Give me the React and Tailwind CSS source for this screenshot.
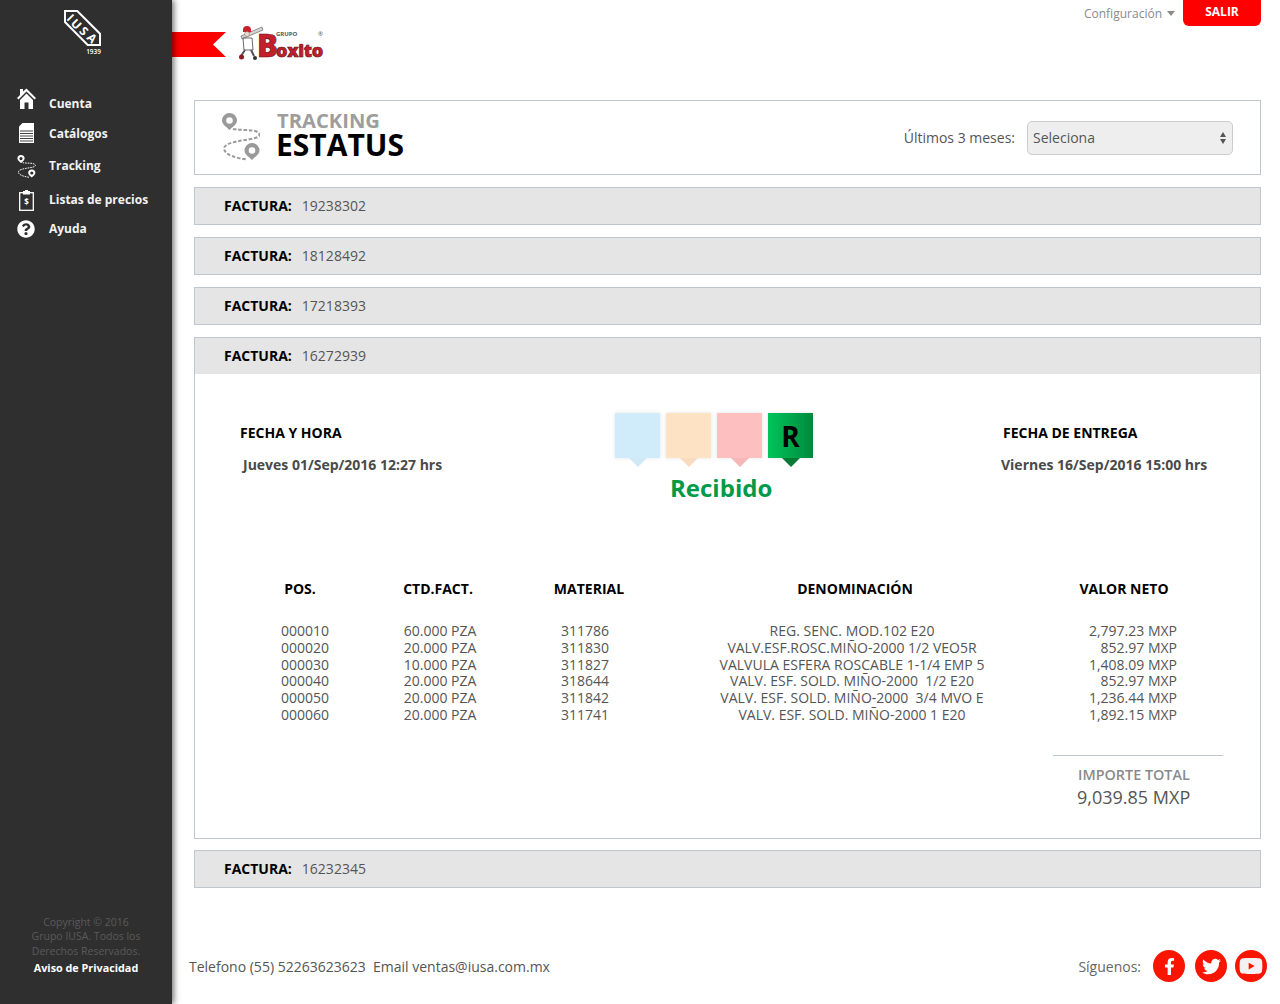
import React from 'react';
import { FaQuestionCircle, FaFacebookF, FaTwitter, FaYoutube } from 'react-icons/fa';

const font = { fontFamily: '"Open Sans", sans-serif' };

function RouteIcon({ className, pin, dash }) {
  return (
    <svg viewBox="0 0 38 48" className={className} fill="none">
      <path d="M11 16 C18 18 37 15 37.500 22 C37 28 5 26 2 35 C2 42 14 45 25 46.500" stroke={dash} strokeWidth="2" strokeDasharray="3.500 1.800" />
      <path fillRule="evenodd" fill={pin} d="M7.500 0 a7.500 7.500 0 0 1 7.500 7.500 c0 4 -4.800 6.500 -7.500 9.500 c-2.700 -3 -7.500 -5.500 -7.500 -9.500 a7.500 7.500 0 0 1 7.500 -7.500z m0 4.200 a3.300 3.300 0 1 0 0 6.600 a3.300 3.300 0 0 0 0 -6.600z" />
      <path fillRule="evenodd" fill={pin} d="M30 30 a7.500 7.500 0 0 1 7.500 7.500 c0 4 -4.800 6.500 -7.500 9.500 c-2.700 -3 -7.500 -5.500 -7.500 -9.500 a7.500 7.500 0 0 1 7.500 -7.500z m0 4.200 a3.300 3.300 0 1 0 0 6.600 a3.300 3.300 0 0 0 0 -6.600z" />
    </svg>
  );
}

function IusaLogo() {
  return (
    <svg viewBox="0 0 40 44" className="h-[44px] w-[40px]">
      <path d="M2 1 H14.300 L37 23.700 V35 H24.700 L2 12 Z" fill="none" stroke="#fff" strokeWidth="2" />
      <g fill="#fff" fontFamily="'Open Sans', sans-serif" fontWeight="700" fontSize="12" textAnchor="middle">
        <text transform="translate(7.500 7.500) rotate(45)" y="4.500">I</text>
        <text transform="translate(13.500 14) rotate(45)" y="4.500">U</text>
        <text transform="translate(21 21) rotate(45)" y="4.500">S</text>
        <text transform="translate(29 28) rotate(45)" y="4.500">A</text>
      </g>
      <text x="38" y="43.500" textAnchor="end" fill="#fff" fontFamily="'Open Sans', sans-serif" fontWeight="600" fontSize="6.500">1939</text>
    </svg>
  );
}

function HomeIcon() {
  return (
    <svg viewBox="0 0 19 21" className="-mt-[12px] h-[21px] w-[19px]" fill="#fff">
      <path d="M3 1 H6 V3.500 L9.500 0.500 L19 10 L17.500 11.500 L9.500 3.500 L1.500 11.500 L0 10 L3 7 Z" />
      <path d="M9.500 5.500 L16 12 V21 H11.500 V14.500 H7.500 V21 H3 V12 Z" />
    </svg>
  );
}

function DocIcon() {
  return (
    <svg viewBox="0 0 15 20" className="-mt-[2px] h-[20px] w-[15px]" fill="#fff">
      <path d="M3.500 0 H15 V20 H0 V3.500 Z" />
      <path d="M1 8h13M1 10.500h13M1 13h13M1 15.500h13M1 18h13" stroke="#2f2f2f" strokeWidth="0.900" />
    </svg>
  );
}

function PriceIcon() {
  return (
    <svg viewBox="0 0 15 21" className="h-[21px] w-[15px]">
      <rect x="0.700" y="2.700" width="13.600" height="17.600" fill="none" stroke="#fff" strokeWidth="1.300" />
      <rect x="4" y="1" width="7" height="3.500" fill="#fff" />
      <rect x="6" y="0" width="3" height="2" fill="#fff" />
      <text x="7.500" y="15" textAnchor="middle" fill="#fff" fontFamily="'Open Sans', sans-serif" fontWeight="700" fontSize="8">$</text>
    </svg>
  );
}

function NavItem({ icon, label, className }) {
  return (
    <div className={`flex h-[28px] items-center ${className}`}>
      <div className="flex w-[49px] justify-center pl-[3px]">{icon}</div>
      <span className="text-[12px] font-bold text-[#f2f2f2]">{label}</span>
    </div>
  );
}

function Sidebar() {
  return (
    <aside className="z-10 flex h-[1004px] w-[172px] shrink-0 flex-col bg-[#2f2f2f] shadow-[2px_0_6px_rgba(0,0,0,0.55)]">
      <div className="pt-[10px] pl-[63px]">
        <IusaLogo />
      </div>
      <nav className="mt-[36px] flex flex-col">
        <NavItem icon={<HomeIcon />} label="Cuenta" />
        <NavItem className="mt-[2px]" icon={<DocIcon />} label="Catálogos" />
        <NavItem className="mt-[4px]" icon={<RouteIcon className="h-[23px] w-[19px]" pin="#fff" dash="#fff" />} label="Tracking" />
        <NavItem className="mt-[6px]" icon={<PriceIcon />} label="Listas de precios" />
        <NavItem className="mt-[1px]" icon={<FaQuestionCircle className="text-[18px] text-white" />} label="Ayuda" />
      </nav>
      <div className="mt-auto pb-[28px] text-center">
        <p className="text-[10.500px] leading-[14.500px] text-[#5a5a5a]">
          Copyright © 2016<br />Grupo IUSA. Todos los<br />Derechos Reservados.
        </p>
        <p className="mt-[2px] text-[10.800px] leading-[16px] font-bold text-white">Aviso de Privacidad</p>
      </div>
    </aside>
  );
}

function BoxitoLogo() {
  const stroke = '[-webkit-text-stroke:0.6px_#5a1015]';
  return (
    <div className="relative h-[36px] w-[88px]">
      <svg viewBox="0 0 26 36" className="absolute top-0 left-0 h-[36px] w-[26px]">
        <path d="M3 11 L24 2 L25 5 L4 14 Z" fill="#d4d4d4" stroke="#555" strokeWidth="0.600" />
        <path d="M5 5 a4 4 0 0 1 8 0 v2 h-8 z" fill="#c8202c" />
        <circle cx="9" cy="9" r="2.500" fill="#f3d9c8" stroke="#555" strokeWidth="0.400" />
        <path d="M5 13 h9 l1 12 h-9 z" fill="#fff" stroke="#444" strokeWidth="0.800" />
        <path d="M7 25 L3 31 M13 25 L16 31" stroke="#555" strokeWidth="2" />
        <circle cx="3.500" cy="32" r="2.500" fill="#8b1a22" />
        <circle cx="17" cy="33" r="2" fill="#333" />
      </svg>
      <span className={`absolute top-[5px] left-[19px] text-[31px] leading-[30px] font-extrabold text-[#c41f2b] ${stroke}`}>B</span>
      <span className={`absolute top-[16px] left-[38px] text-[18px] leading-[18px] font-extrabold tracking-[-0.3px] text-[#c41f2b] ${stroke}`}>oxito</span>
      <span className="absolute top-[6px] left-[38px] text-[6px] leading-[6px] font-bold text-[#555]">GRUPO</span>
      <span className="absolute top-[6px] left-[80px] text-[6px] leading-[6px] text-[#555]">®</span>
    </div>
  );
}

function TopBar() {
  return (
    <div className="relative h-[100px]">
      <div className="absolute top-0 right-[19px] flex items-start">
        <div className="mt-[5px] flex items-center gap-[5px] text-[12px] leading-[17px] text-[#8a8a8a]">
          Configuración
          <span className="h-0 w-0 border-x-[4px] border-t-[5px] border-x-transparent border-t-[#8a8a8a]" />
        </div>
        <button className="ml-[8px] h-[26px] w-[78px] rounded-b-[6px] bg-[#fe0000] pb-[3px] text-[12px] font-bold text-white">SALIR</button>
      </div>
      <div className="flex items-start pt-[25px]">
        <svg viewBox="0 0 54 25" className="mt-[7px] h-[25px] w-[54px]"><path d="M0 0 H54 L41 12.500 L54 25 H0 Z" fill="#fe0000" /></svg>
        <div className="ml-[12px]"><BoxitoLogo /></div>
      </div>
    </div>
  );
}

function HeaderPanel() {
  return (
    <div className="mr-[19px] ml-[22px] flex h-[75px] items-center justify-between border border-[#bfc6d0] pr-[27px] pl-[27px]">
      <div className="flex items-center">
        <RouteIcon className="-mt-[1px] h-[48px] w-[38px]" pin="#9a9a9a" dash="#9a9a9a" />
        <div className="-mt-[5px] ml-[17px] flex flex-col">
          <span className="text-[20.200px] leading-[20px] font-bold text-[#9d9d9d]">TRACKING</span>
          <span className="-ml-[1px] text-[30px] leading-[30px] font-bold text-black">ESTATUS</span>
        </div>
      </div>
      <div className="flex items-center">
        <span className="text-[14px] text-[#555]">Últimos 3 meses:</span>
        <div className="ml-[12px] flex h-[34px] w-[206px] items-center justify-between rounded-[5px] border border-[#cdcdcd] bg-[#eeeeee] pr-[6px] pl-[5px] text-[14px] text-[#555]">
          Seleciona
          <span className="flex flex-col gap-[2px]">
            <span className="h-0 w-0 border-x-[3.500px] border-b-[5px] border-x-transparent border-b-[#555]" />
            <span className="h-0 w-0 border-x-[3.500px] border-t-[5px] border-x-transparent border-t-[#555]" />
          </span>
        </div>
      </div>
    </div>
  );
}

function FacturaBar({ number, className = '' }) {
  return (
    <div className={`flex h-[38px] items-center border border-[#bfc6d0] bg-[#e5e5e5] pb-[2px] pl-[29px] text-[14px] ${className}`}>
      <span className="font-bold text-black">FACTURA:</span>
      <span className="ml-[10px] text-[#555]">{number}</span>
    </div>
  );
}

function Flag({ color, tip, children }) {
  return (
    <div className="relative h-[45px] w-[45px] shadow-[0_0_4px_rgba(120,120,140,0.2)]" style={{ background: color }}>
      {children}
      <span
        className="absolute top-[45px] left-1/2 h-0 w-0 -translate-x-1/2 border-x-[9px] border-t-[9px] border-x-transparent"
        style={{ borderTopColor: tip }}
      />
    </div>
  );
}

const rows = [
  ['000010', '60.000 PZA', '311786', 'REG. SENC. MOD.102 E20', '2,797.23 MXP'],
  ['000020', '20.000 PZA', '311830', 'VALV.ESF.ROSC.MIÑO-2000 1/2 VEO5R', '852.97 MXP'],
  ['000030', '10.000 PZA', '311827', 'VALVULA ESFERA ROSCABLE 1-1/4 EMP 5', '1,408.09 MXP'],
  ['000040', '20.000 PZA', '318644', 'VALV. ESF. SOLD. MIÑO-2000  1/2 E20', '852.97 MXP'],
  ['000050', '20.000 PZA', '311842', 'VALV. ESF. SOLD. MIÑO-2000  3/4 MVO E', '1,236.44 MXP'],
  ['000060', '20.000 PZA', '311741', 'VALV. ESF. SOLD. MIÑO-2000 1 E20', '1,892.15 MXP'],
];

function Detail() {
  return (
    <div className="h-[502px] border border-[#bfc6d0]">
      <div className="flex h-[36px] items-center bg-[#e5e5e5] pb-[2px] pl-[29px] text-[14px]">
        <span className="font-bold text-black">FACTURA:</span>
        <span className="ml-[10px] text-[#555]">16272939</span>
      </div>
      <div className="relative h-[180px]">
        <div className="absolute top-[48px] left-[45px] text-[14px] font-bold text-black">FECHA Y HORA</div>
        <div className="absolute top-[80px] left-[48px] text-[14px] font-bold text-[#4a4a4a]">Jueves 01/Sep/2016 12:27 hrs</div>
        <div className="absolute top-[39px] left-[420px] flex gap-[6px]">
          <Flag color="#d0ecfb" tip="#d0e9f5" />
          <Flag color="#fde2c4" tip="#f9dcc0" />
          <Flag color="#fdbfbf" tip="#f5b7b7" />
          <Flag color="linear-gradient(90deg,#00c45a,#008a3c)" tip="#067a35">
            <span className="flex h-full items-center justify-center text-[28px] font-bold text-black">R</span>
          </Flag>
        </div>
        <div className="absolute top-[97px] left-[475px] text-[24px] leading-[34px] font-bold text-[#009a49]">Recibido</div>
        <div className="absolute top-[48px] left-[808px] text-[14px] font-bold text-black">FECHA DE ENTREGA</div>
        <div className="absolute top-[80px] left-[806px] text-[14px] font-bold text-[#4a4a4a]">Viernes 16/Sep/2016 15:00 hrs</div>
      </div>
      <div className="mt-[24px] flex text-center text-[14px] font-bold text-black">
        <div className="ml-[45px] w-[120px]">POS.</div>
        <div className="ml-[18px] w-[120px]">CTD.FACT.</div>
        <div className="ml-[31px] w-[120px]">MATERIAL</div>
        <div className="ml-[45px] w-[322px]">DENOMINACIÓN</div>
        <div className="ml-[28px] w-[160px]">VALOR NETO</div>
      </div>
      <div className="mt-[24px] flex flex-col text-[14px] leading-[16.800px] whitespace-pre text-[#555]">
        {rows.map((r) => (
          <div key={r[0]} className="flex text-center">
            <div className="ml-[50px] w-[120px]">{r[0]}</div>
            <div className="ml-[15px] w-[120px]">{r[1]}</div>
            <div className="ml-[25px] w-[120px]">{r[2]}</div>
            <div className="ml-[46px] w-[322px]">{r[3]}</div>
            <div className="w-[164px] text-right">{r[4]}</div>
          </div>
        ))}
      </div>
      <div className="mt-[31px] ml-[858px] w-[170px] border-t border-[#b9c9cc] pt-[8px]">
        <div className="pl-[25px] text-[14.400px] font-semibold text-[#8a8a8a]">IMPORTE TOTAL</div>
        <div className="pl-[24px] text-[18px] leading-[24px] text-[#555]">9,039.85 MXP</div>
      </div>
    </div>
  );
}

function Footer() {
  const circle = 'flex h-[32px] w-[32px] items-center justify-center rounded-full bg-[#fb1400]';
  return (
    <div className="mt-[62px] flex items-center justify-between pr-[13px] pl-[17px]">
      <span className="text-[14px] text-[#555]">Telefono (55) 52263623623  Email ventas@iusa.com.mx</span>
      <div className="flex items-center">
        <span className="text-[14px] text-[#666]">Síguenos:</span>
        <div className="ml-[12px] flex">
          <span className={circle}><FaFacebookF className="text-[17px] text-white" /></span>
          <span className={`ml-[10px] ${circle}`}><FaTwitter className="text-[19px] text-white" /></span>
          <span className={`ml-[8px] ${circle}`}><FaYoutube className="text-[24px] text-[#f2f2f2]" /></span>
        </div>
      </div>
    </div>
  );
}

export default function App() {
  return (
    <div className="flex h-[1004px] w-[1280px] overflow-hidden bg-white whitespace-pre-wrap" style={font}>
      <Sidebar />
      <main className="flex-1">
        <TopBar />
        <HeaderPanel />
        <div className="mt-[12px] mr-[19px] ml-[22px] flex flex-col gap-[12px]">
          <FacturaBar number="19238302" />
          <FacturaBar number="18128492" />
          <FacturaBar number="17218393" />
          <Detail />
          <FacturaBar number="16232345" className="-mt-px" />
        </div>
        <Footer />
      </main>
    </div>
  );
}
